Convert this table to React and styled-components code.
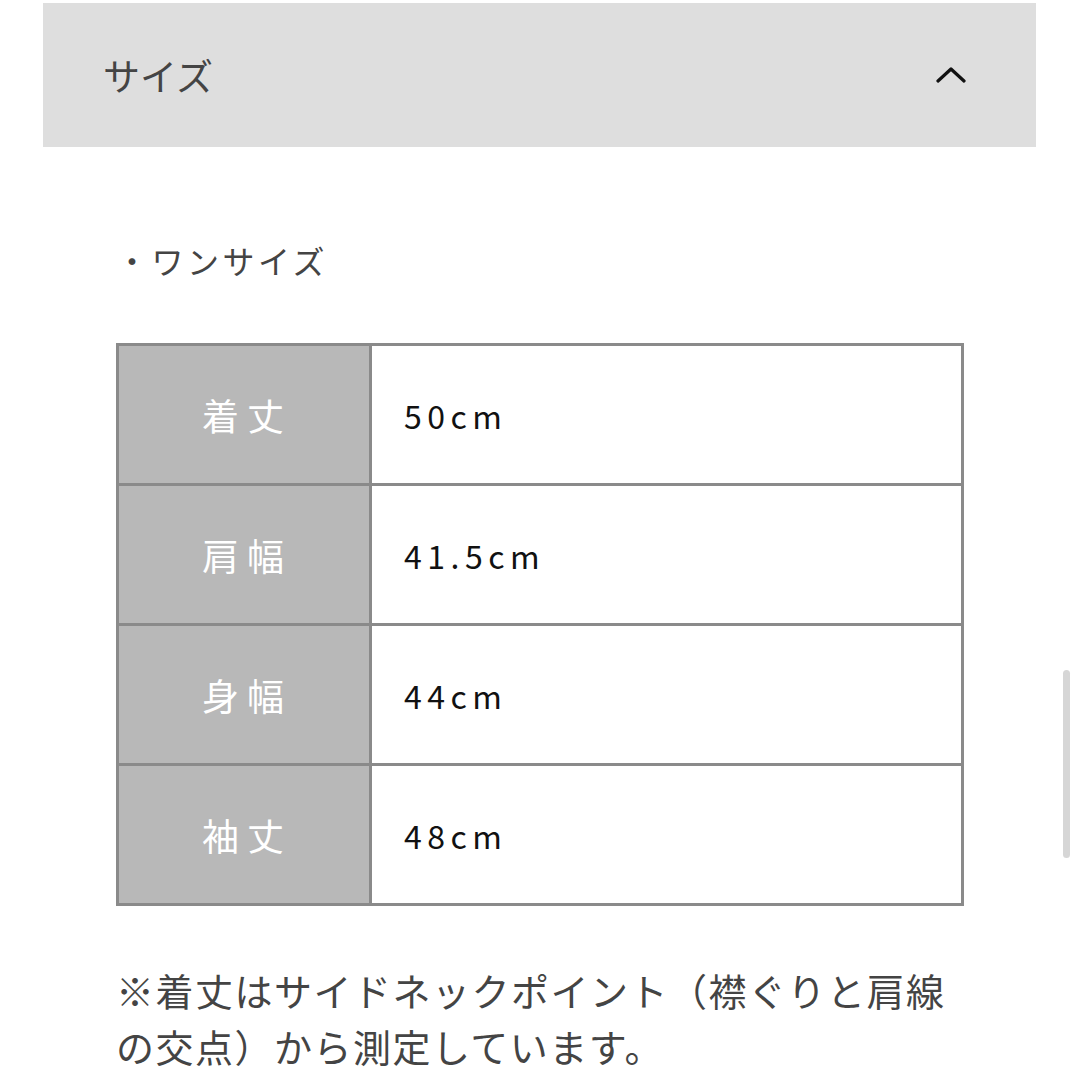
import React from 'react';
import styled, { createGlobalStyle } from 'styled-components';

const GlobalStyle = createGlobalStyle`
  body {
    margin: 0;
    background: #ffffff;
    font-family: "Noto Sans CJK JP", "Noto Sans", sans-serif;
  }
`;

const Page = styled.div`
  position: relative;
  width: 1080px;
  height: 1080px;
  overflow: hidden;
  padding-top: 3px;
  box-sizing: border-box;
`;

const Header = styled.div`
  margin: 0 44px 0 43px;
  height: 144px;
  background: #dedede;
  display: flex;
  align-items: center;
  justify-content: space-between;
  padding: 0 70px 0 60px;
  box-sizing: border-box;
`;

const Title = styled.h2`
  margin: 0;
  font-size: 37px;
  font-weight: 400;
  color: #444444;
  line-height: 1;
`;

const Body = styled.div`
  padding: 0 116px;
`;

const Bullet = styled.p`
  margin: 90px 0 0 0;
  font-size: 32px;
  letter-spacing: 3.5px;
  color: #444444;
  line-height: 46px;
`;

const Table = styled.table`
  margin-top: 60px;
  width: 848px;
  border-collapse: collapse;
  border: 3px solid #8a8a8a;
`;

const Cell = styled.td`
  height: 140px;
  padding: 0;
  border: 3px solid #8a8a8a;
  box-sizing: border-box;
`;

const LabelCell = styled(Cell)`
  width: 253px;
  background: #b8b8b8;
  color: #ffffff;
  text-align: center;
  font-size: 37px;
  letter-spacing: 8px;
  text-indent: 6px;
`;

const ValueCell = styled(Cell)`
  background: #ffffff;
  color: #111111;
  font-size: 32px;
  letter-spacing: 5.5px;
  padding-left: 32px;
`;

const Note = styled.p`
  margin: 56px 0 0 0;
  font-size: 38px;
  letter-spacing: 1.5px;
  line-height: 56px;
  color: #444444;
`;

const Scrollbar = styled.div`
  position: absolute;
  right: 10px;
  top: 670px;
  width: 7px;
  height: 188px;
  border-radius: 4px;
  background: #d6d6d6;
`;

const rows = [
  ['着丈', '50cm'],
  ['肩幅', '41.5cm'],
  ['身幅', '44cm'],
  ['袖丈', '48cm'],
];

const ChevronUp = () => (
  <svg width="30" height="20" viewBox="0 0 30 20">
    <polyline points="2,16 15,4 28,16" fill="none" stroke="#111" strokeWidth="3.2" strokeLinecap="round" strokeLinejoin="round" />
  </svg>
);

export default function App() {
  return (
    <Page>
      <GlobalStyle />
      <Header>
        <Title>サイズ</Title>
        <ChevronUp />
      </Header>
      <Body>
        <Bullet>・ワンサイズ</Bullet>
        <Table>
          <tbody>
            {rows.map(([label, value]) => (
              <tr key={label}>
                <LabelCell>{label}</LabelCell>
                <ValueCell>{value}</ValueCell>
              </tr>
            ))}
          </tbody>
        </Table>
        <Note>※着丈はサイドネックポイント（襟ぐりと肩線の交点）から測定しています。</Note>
      </Body>
      <Scrollbar />
    </Page>
  );
}
